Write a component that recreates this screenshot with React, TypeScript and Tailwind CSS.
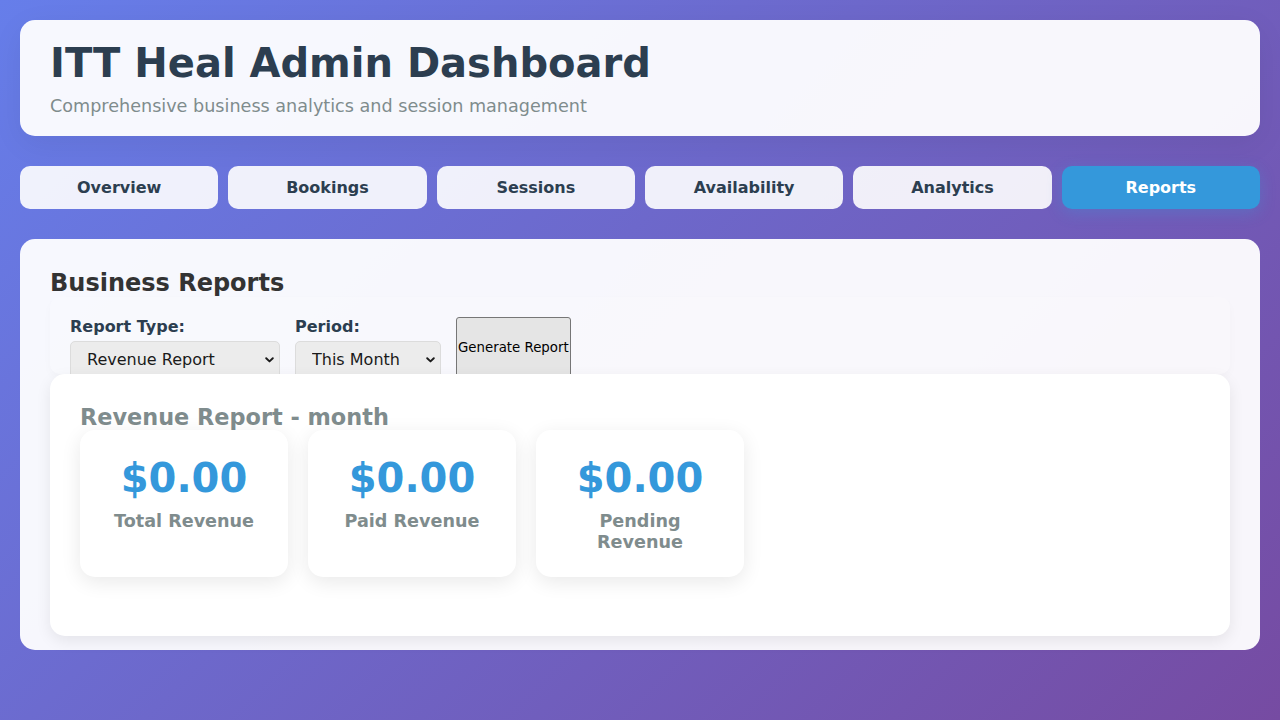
import React from "react";

const tabs = ["Overview", "Bookings", "Sessions", "Availability", "Analytics", "Reports"];

const stats = [
  { value: "$0.00", label: "Total Revenue" },
  { value: "$0.00", label: "Paid Revenue" },
  { value: "$0.00", label: "Pending Revenue" },
];

const Chevron = () => (
  <svg
    className="pointer-events-none absolute right-[6px] top-1/2 -translate-y-1/2"
    width="9"
    height="6"
    viewBox="0 0 9 6"
    fill="none"
  >
    <path d="M1.2 1.2 L4.5 4.4 L7.8 1.2" stroke="#1a1a1a" strokeWidth="1.9" strokeLinecap="round" strokeLinejoin="round" />
  </svg>
);

export default function App() {
  return (
    <div className="min-h-screen bg-[linear-gradient(135deg,#667eea_0%,#764ba2_100%)] p-[20px] font-['DejaVu_Sans',sans-serif]">
      {/* Header */}
      <div className="rounded-[15px] bg-white/95 px-[30px] pb-[19px] pt-[20px] shadow-[0_8px_32px_rgba(0,0,0,0.06)]">
        <h1 className="mb-[10px] text-[40px] font-bold leading-[46px] text-[#2c3e50]">ITT Heal Admin Dashboard</h1>
        <p className="text-[17.6px] leading-[21px] text-[#7f8c8d]">Comprehensive business analytics and session management</p>
      </div>

      {/* Tabs */}
      <div className="mt-[30px] flex gap-[10px]">
        {tabs.map((t) => (
          <button
            key={t}
            className={
              t === "Reports"
                ? "flex-1 rounded-[10px] bg-[#3498db] py-[12px] text-[16px] font-bold leading-[19px] text-white shadow-[0_4px_15px_rgba(52,152,219,0.3)]"
                : "flex-1 rounded-[10px] bg-white/90 py-[12px] text-[16px] font-bold leading-[19px] text-[#2c3e50]"
            }
          >
            {t}
          </button>
        ))}
      </div>

      {/* Content */}
      <div className="mt-[30px] rounded-[15px] bg-white/95 px-[30px] pb-[14px] pt-[30px]">
        <h2 className="text-[24px] font-bold leading-[28px] text-[#333333]">Business Reports</h2>

        <div className="flex h-[77px] gap-[15px] rounded-[10px] bg-white/10 px-[20px] pt-[20px] shadow-[0_4px_10px_rgba(0,0,0,0.025)]">
          <div className="flex flex-col">
            <label className="mb-[5px] text-[16px] font-bold leading-[19px] text-[#2c3e50]">Report Type:</label>
            <div className="relative">
              <select className="h-[38px] w-[210px] appearance-none rounded-[5px] border border-[#dcdcdc] bg-[#ececec] pl-[16px] text-[16px] text-[#1a1a1a] outline-none">
                <option>Revenue Report</option>
                <option>Sessions Report</option>
                <option>Clients Report</option>
              </select>
              <Chevron />
            </div>
          </div>
          <div className="flex flex-col">
            <label className="mb-[5px] text-[16px] font-bold leading-[19px] text-[#2c3e50]">Period:</label>
            <div className="relative">
              <select className="h-[38px] w-[146px] appearance-none rounded-[5px] border border-[#dcdcdc] bg-[#ececec] pl-[16px] text-[16px] text-[#1a1a1a] outline-none">
                <option>This Month</option>
                <option>This Week</option>
                <option>This Year</option>
              </select>
              <Chevron />
            </div>
          </div>
          <button className="h-[62px] rounded-[3px] border border-[#767676] bg-[#e5e5e5] px-[1px] text-[13.33px] text-black">
            Generate Report
          </button>
        </div>

        {/* Report result */}
        <div className="relative z-10 rounded-[15px] bg-white px-[30px] pb-[59px] pt-[30px] shadow-[0_5px_15px_rgba(0,0,0,0.08)]">
          <h3 className="text-[22.4px] font-bold leading-[26px] text-[#7f8c8d]">Revenue Report - month</h3>
          <div className="grid grid-cols-5 gap-[20px]">
            {stats.map((s) => (
              <div key={s.label} className="rounded-[15px] bg-white p-[25px] text-center shadow-[0_5px_20px_rgba(0,0,0,0.09)]">
                <div className="text-[40px] font-bold leading-[46px] text-[#3498db]">{s.value}</div>
                <div className="mt-[10px] text-[17.6px] font-bold leading-[20.5px] text-[#7f8c8d]">{s.label}</div>
              </div>
            ))}
          </div>
        </div>
      </div>
    </div>
  );
}
